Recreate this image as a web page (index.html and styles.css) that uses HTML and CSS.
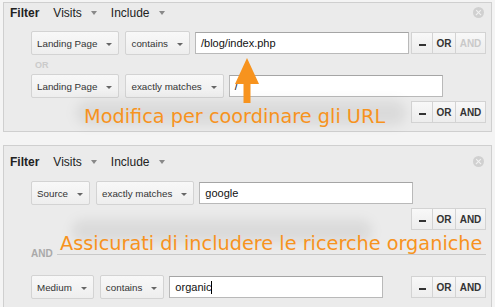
FILE: index.html
```html
<!DOCTYPE html>
<html>
<head>
<meta charset="utf-8">
<link rel="stylesheet" href="styles.css">
</head>
<body>
<div class="panel panel-top">
  <div class="head">
    <span class="filter">Filter</span>
    <span class="dd">Visits<i class="caret"></i></span>
    <span class="dd">Include<i class="caret"></i></span>
    <span class="close"></span>
  </div>
  <div class="cond">
    <div class="row">
      <span class="sel">Landing Page<i class="caret dark"></i></span>
      <span class="sel">contains<i class="caret dark"></i></span>
      <span class="inp">/blog/index.php</span>
      <span class="ops"><span class="op minus"><i class="bar"></i></span><span class="op or">OR</span><span class="op and off">AND</span></span>
    </div>
    <div class="conn conn-or"><span class="lbl">OR</span></div>
    <div class="row">
      <span class="sel">Landing Page<i class="caret dark"></i></span>
      <span class="sel">exactly matches<i class="caret dark"></i></span>
      <span class="inp">/</span>
      <span class="ops"><span class="op minus"><i class="bar"></i></span><span class="op or">OR</span><span class="op and">AND</span></span>
    </div>
  </div>
  <div class="blob blob-1"></div>
  <div class="note note-1">Modifica per coordinare gli URL</div>
  <svg class="arrow" width="28" height="48" viewBox="0 0 28 48"><path d="M14 2 L26 28 L17.5 28 L17.5 47 L10.5 47 L10.5 28 L2 28 Z" fill="#f7931e"/></svg>
</div>

<div class="panel panel-bottom">
  <div class="head">
    <span class="filter">Filter</span>
    <span class="dd">Visits<i class="caret"></i></span>
    <span class="dd">Include<i class="caret"></i></span>
    <span class="close"></span>
  </div>
  <div class="cond">
    <div class="row">
      <span class="sel">Source<i class="caret dark"></i></span>
      <span class="sel">exactly matches<i class="caret dark"></i></span>
      <span class="inp">google</span>
      <span class="ops"><span class="op minus"><i class="bar"></i></span><span class="op or">OR</span><span class="op and">AND</span></span>
    </div>
    <div class="conn conn-and"><span class="lbl">AND</span><span class="rule"></span></div>
    <div class="row">
      <span class="sel">Medium<i class="caret dark"></i></span>
      <span class="sel">contains<i class="caret dark"></i></span>
      <span class="inp">organic<i class="cursor"></i></span>
      <span class="ops"><span class="op minus"><i class="bar"></i></span><span class="op or">OR</span><span class="op and">AND</span></span>
    </div>
  </div>
  <div class="blob blob-2"></div>
  <div class="note note-2">Assicurati di includere le ricerche organiche</div>
</div>
</body>
</html>
```

FILE: styles.css
```css
html, body {
  margin: 0;
  padding: 0;
}
body {
  background: #f4f4f4;
  font-family: "Liberation Sans", Arial, sans-serif;
  color: #222;
  padding-top: 2px;
  height: 305px;
  overflow: hidden;
}
.panel {
  position: relative;
  margin-left: 3px;
  width: 487px;
  background: #ebebeb;
  border: 1px solid #cfcfcf;
}
.panel-top {
  padding-bottom: 8px;
}
.panel-bottom {
  margin-top: 13px;
  padding-top: 6px;
  padding-bottom: 20px;
}
.head {
  display: flex;
  align-items: center;
  height: 19px;
  padding-left: 6px;
  padding-right: 7px;
  font-size: 12px;
}
.filter {
  font-weight: bold;
  color: #222;
  margin-right: 14px;
}
.dd {
  display: flex;
  align-items: center;
  color: #222;
  margin-right: 14px;
}
.dd .caret {
  margin-left: 9px;
}
.caret {
  display: inline-block;
  width: 0;
  height: 0;
  border-left: 3.5px solid transparent;
  border-right: 3.5px solid transparent;
  border-top: 4px solid #888;
}
.caret.dark {
  border-left-width: 3px;
  border-right-width: 3px;
  border-top: 3.5px solid #666;
  margin-left: 9px;
  margin-top: 2px;
}
.close {
  margin-left: auto;
  width: 11px;
  height: 11px;
  border-radius: 50%;
  background: #d0d0d0;
  position: relative;
}
.close::before, .close::after {
  content: "";
  position: absolute;
  left: 2px;
  top: 5px;
  width: 7px;
  height: 1.4px;
  background: #f2f2f2;
  transform: rotate(45deg);
}
.close::after {
  transform: rotate(-45deg);
}
.cond {
  padding: 9px 5px 0 27px;
}
.panel-bottom .cond {
  padding-top: 10px;
}
.row {
  display: flex;
  flex-wrap: wrap;
  align-items: center;
  row-gap: 3px;
}
.sel {
  display: flex;
  align-items: center;
  flex-shrink: 0;
  box-sizing: border-box;
  height: 24px;
  padding: 0 6px 0 5px;
  margin-right: 6px;
  font-size: 9.8px;
  color: #333;
  background: linear-gradient(#f8f8f8, #eeeeee);
  border: 1px solid #d3d3d3;
  border-radius: 2px;
}
.sel + .sel {
  margin-right: 5px;
}
.inp {
  display: flex;
  align-items: center;
  flex-shrink: 0;
  box-sizing: border-box;
  width: 214px;
  height: 22px;
  padding-left: 5px;
  font-size: 11px;
  color: #111;
  background: #fff;
  border: 1px solid #b9b9b9;
  border-top-color: #a5a5a5;
}
.cursor {
  display: inline-block;
  width: 1px;
  height: 13px;
  background: #000;
}
.ops {
  display: flex;
  flex-shrink: 0;
  margin-left: auto;
}
.op {
  display: flex;
  align-items: center;
  justify-content: center;
  box-sizing: border-box;
  height: 22px;
  font-size: 10px;
  font-weight: bold;
  color: #333;
  background: linear-gradient(#f8f8f8, #ededed);
  border: 1px solid #d3d3d3;
}
.op + .op {
  border-left: 0;
}
.op.minus {
  width: 22px;
}
.op.or {
  width: 23px;
}
.op.and {
  width: 30px;
}
.op.off {
  color: #c9c9c9;
}
.bar {
  display: block;
  width: 7px;
  height: 2px;
  margin-top: 3px;
  background: #333;
}
.conn {
  display: flex;
  align-items: center;
  font-weight: bold;
}
.conn-or {
  height: 19px;
  font-size: 9px;
  color: #cacaca;
  padding-left: 4px;
}
.conn-and {
  height: 45px;
  font-size: 10px;
  color: #a9a9a9;
  padding-top: 2px;
  box-sizing: border-box;
}
.rule {
  flex: 1;
  height: 1px;
  background: #c9c9c9;
  margin-left: 4px;
  margin-top: 1px;
}
.blob {
  position: absolute;
  background: rgba(0, 0, 0, 0.07);
  filter: blur(6px);
  border-radius: 14px;
}
.blob-1 {
  left: 72px;
  top: 98px;
  width: 330px;
  height: 24px;
}
.blob-2 {
  left: 68px;
  top: 74px;
  width: 300px;
  height: 22px;
}
.note {
  position: absolute;
  font-family: "DejaVu Sans", Verdana, sans-serif;
  font-size: 19.3px;
  line-height: 22px;
  color: #f7931e;
  white-space: nowrap;
}
.note-1 {
  left: 80px;
  top: 103px;
}
.note-2 {
  left: 56px;
  top: 87px;
}
.arrow {
  position: absolute;
  left: 229px;
  top: 53px;
}
```
